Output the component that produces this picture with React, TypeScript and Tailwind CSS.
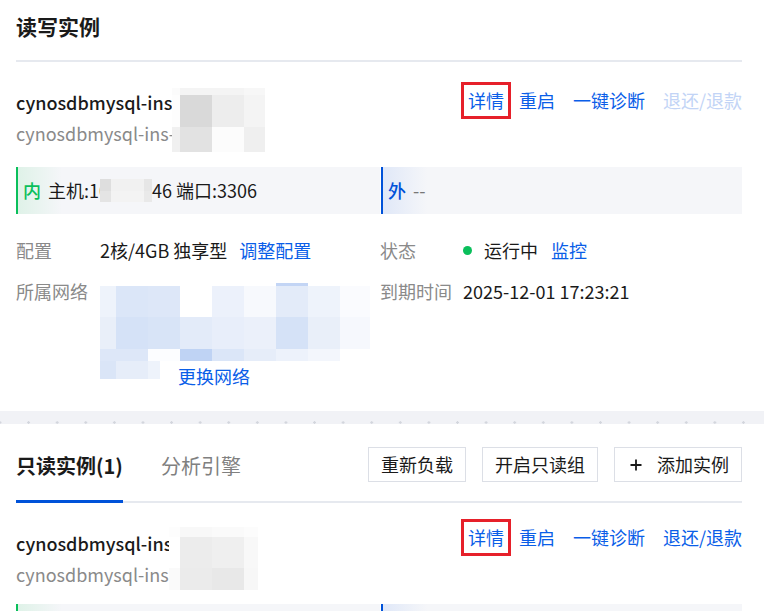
import React from "react";

type Cell = [number, string];
type Row = { h: number; cells: Cell[] };

// 打码块：按行列的色块拼出马赛克
function Mosaic({ rows, className = "" }: { rows: Row[]; className?: string }) {
  return (
    <div className={"flex flex-col shrink-0 " + className}>
      {rows.map((r, i) => (
        <div key={i} className="flex">
          {r.cells.map(([w, c], j) => (
            <div key={j} style={{ width: w, height: r.h, background: c }} />
          ))}
        </div>
      ))}
    </div>
  );
}

const nameMosaicTop: Row[] = [
  { h: 7, cells: [[8, "#fbfbfb"], [32, "#f4f4f4"], [32, "#f4f4f4"], [21, "#f7f7f7"]] },
  { h: 32, cells: [[8, "#fdfdfd"], [32, "#d9d9d9"], [32, "#ededed"], [21, "#f4f4f4"]] },
  { h: 25, cells: [[8, "#f0f0f0"], [32, "#e2e2e2"], [32, "#fcfcfc"], [21, "#efefef"]] },
];

const nameMosaicBottom: Row[] = [
  { h: 10, cells: [[11, "#fdfdfd"], [32, "#f8f8f8"], [32, "#fafafa"], [14, "#fcfcfc"]] },
  { h: 31, cells: [[11, "#ffffff"], [32, "#ececec"], [32, "#efefef"], [14, "#f8f8f8"]] },
  { h: 22, cells: [[11, "#fafafa"], [32, "#ebebeb"], [32, "#e8e8e8"], [14, "#f7f7f7"]] },
];

const hostMosaic: Row[] = [
  { h: 12, cells: [[11, "#dedede"], [33, "#f1f1f1"], [8, "#e6e6e6"]] },
  { h: 11, cells: [[11, "#e4e4e4"], [33, "#f3f3f3"], [8, "#e9e9e9"]] },
];

const W = [16, 32, 32, 32, 32, 32, 32, 32, 30];
const netRow = (h: number, colors: string[]): Row => ({
  h,
  cells: colors.map((c, i) => [W[i], c] as Cell),
});

const netMosaic: Row[] = [
  netRow(3, ["#ffffff", "#ffffff", "#ffffff", "#ffffff", "#ffffff", "#ffffff", "#c3d5f5", "#ffffff", "#ffffff"]),
  netRow(31, ["#eef3fb", "#dbe6f8", "#dde7f8", "#ffffff", "#ecf1fb", "#f7f9fd", "#e3ebf9", "#eef3fb", "#fafbfe"]),
  netRow(32, ["#e9eff9", "#d5e2f7", "#d8e4f7", "#e3ebf9", "#e8eefa", "#ebf0fa", "#d5e2f7", "#e9eff9", "#f6f8fd"]),
  netRow(12, ["#dde7f8", "#dde7f8", "#fcfdff", "#bfd3f4", "#dbe6f8", "#e6edf9", "#edf2fb", "#f3f6fc", "#ffffff"]),
];

const netMosaicTail: Row[] = [
  { h: 18, cells: [[16, "#dae5f7"], [32, "#e6edf9"], [12, "#eef3fb"]] },
];

const link = "text-[#0a5ee8]";
const gray = "text-[#8a8a8a]";

function Actions({ refundDisabled }: { refundDisabled?: boolean }) {
  return (
    <div className="ml-auto flex items-center text-[18px] leading-[31px]">
      <div className="border-[3px] border-[#e6202a] px-[4px]">
        <span className={link}>详情</span>
      </div>
      <span className={"ml-[8px] " + link}>重启</span>
      <span className={"ml-[18px] " + link}>一键诊断</span>
      <span className={"ml-[18px] " + (refundDisabled ? "text-[#c2d4f6]" : link)}>退还/退款</span>
    </div>
  );
}

function InstanceHead({ bottom }: { bottom?: boolean }) {
  return (
    <div className="flex items-start">
      <div
        className={
          "flex flex-col overflow-hidden whitespace-nowrap text-[18px] leading-[31px] " +
          (bottom ? "w-[153px] pt-[9px]" : "w-[156px] pt-[5px]")
        }
      >
        <span className="font-medium text-[#1a1a1a]">cynosdbmysql-ins</span>
        <span className={gray}>{bottom ? "cynosdbmysql-ins" : "cynosdbmysql-ins-"}</span>
      </div>
      <Mosaic rows={bottom ? nameMosaicBottom : nameMosaicTop} className={bottom ? "mt-[8px]" : "mt-[6px]"} />
      <Actions refundDisabled={!bottom} />
    </div>
  );
}

function AddressPanels() {
  return (
    <div className="flex h-[47px] gap-px text-[18px]">
      <div className="flex w-[364px] items-center border-l-2 border-[#0abf5b] bg-[linear-gradient(90deg,#dff2e8,#f5f6f9_44px)] pl-[5px]">
        <span className="font-medium text-[#0abf5b]">内</span>
        <span className="ml-[7px] text-[#1a1a1a]">主机:10</span>
        <Mosaic rows={hostMosaic} className="-ml-[9px]" />
        <span className="text-[#1a1a1a]">46 端口:3306</span>
      </div>
      <div className="flex flex-1 items-center border-l-2 border-[#0052d9] bg-[linear-gradient(90deg,#e0e8f8,#f5f6f9_44px)] pl-[5px]">
        <span className="font-medium text-[#0052d9]">外</span>
        <span className="ml-[7px] text-[#777]">--</span>
      </div>
    </div>
  );
}

function Button({ children }: { children: React.ReactNode }) {
  return (
    <div className="flex h-[35px] items-center border border-[#dcdfe6] px-[12px] text-[18px] text-[#1a1a1a]">
      {children}
    </div>
  );
}

export default function App() {
  return (
    <div className="w-[764px] bg-white font-['Noto_Sans_CJK_SC','Noto_Sans',sans-serif] text-[#1a1a1a]">
      {/* 读写实例 */}
      <div className="pl-[16px] pr-[22px]">
        <div className="pt-[12px] text-[21px] font-bold leading-[28px]">读写实例</div>
        <div className="mt-[20px] border-b-2 border-[#e6e9ef]" />
        <div className="mt-[20px]">
          <InstanceHead />
        </div>
        <div className="mt-[15px]">
          <AddressPanels />
        </div>
        <div className="mt-[23px] grid grid-cols-[364px_1fr] gap-y-[15px] text-[18px] leading-[26px]">
          <div className="flex">
            <span className={"w-[84px] " + gray}>配置</span>
            <span>2核/4GB 独享型</span>
            <span className={"ml-[12px] " + link}>调整配置</span>
          </div>
          <div className="flex">
            <span className={"w-[83px] " + gray}>状态</span>
            <span className="flex items-center">
              <span className="h-[9px] w-[9px] rounded-full bg-[#0abf5b]" />
            </span>
            <span className="ml-[12px]">运行中</span>
            <span className={"ml-[13px] " + link}>监控</span>
          </div>
          <div className="flex">
            <span className={"w-[84px] " + gray}>所属网络</span>
            <div className="flex flex-col pt-[5px]">
              <Mosaic rows={netMosaic} />
              <div className="flex items-start">
                <Mosaic rows={netMosaicTail} />
                <span className={"ml-[18px] mt-[2px] " + link}>更换网络</span>
              </div>
            </div>
          </div>
          <div className="flex">
            <span className={"w-[83px] " + gray}>到期时间</span>
            <span>2025-12-01 17:23:21</span>
          </div>
        </div>
      </div>

      {/* 分隔带 */}
      <div className="mt-[22px] flex h-[13px] flex-col justify-end bg-[#f1f2f6]">
        <div className="h-[3px] bg-[radial-gradient(circle,#d3d6dd_1px,transparent_1.5px)] bg-[length:28.6px_3px] bg-[position:-14.3px_0] bg-repeat-x" />
      </div>

      {/* 只读实例 */}
      <div className="pl-[16px] pr-[22px]">
        <div className="mt-[23px] flex justify-between border-b-2 border-[#e6e9ef]">
          <div className="flex gap-[38px] text-[20px] leading-[28px]">
            <div className="-mb-[2px] border-b-[3px] border-[#0052d9] pb-[20px] pt-[5px] font-bold">只读实例(1)</div>
            <div className="-mb-[2px] border-b-[3px] border-transparent pb-[20px] pt-[5px] text-[#808080]">分析引擎</div>
          </div>
          <div className="flex items-start gap-[16px]">
            <Button>重新负载</Button>
            <Button>开启只读组</Button>
            <Button>
              <span className="flex h-[18px] w-[18px] items-center justify-center">
                <svg width="12" height="12" viewBox="0 0 12 12">
                  <path d="M6 0.5v11M0.5 6h11" stroke="#1a1a1a" strokeWidth="1.8" />
                </svg>
              </span>
              <span className="ml-[12px]">添加实例</span>
            </Button>
          </div>
        </div>
        <div className="mt-[16px]">
          <InstanceHead bottom />
        </div>
        <div className="mt-[14px]">
          <AddressPanels />
        </div>
        <div className="h-[40px]" />
      </div>
    </div>
  );
}
